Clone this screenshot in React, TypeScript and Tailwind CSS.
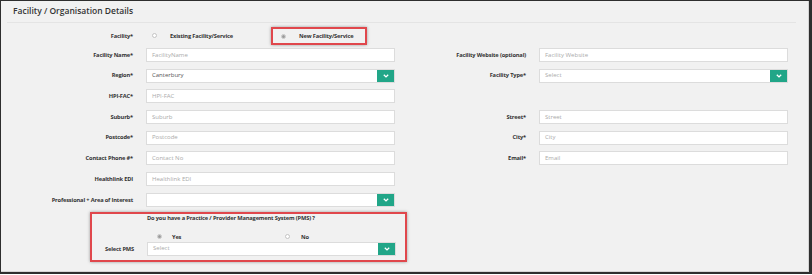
import React from "react";

type Field = {
  label: string;
  placeholder?: string;
  value?: string;
  select?: boolean;
};

const rows: [Field, Field | null][] = [
  [
    { label: "Facility Name*", placeholder: "FacilityName" },
    { label: "Facility Website (optional)", placeholder: "Facility Website" },
  ],
  [
    { label: "Region*", value: "Canterbury", select: true },
    { label: "Facility Type*", placeholder: "Select", select: true },
  ],
  [{ label: "HPI-FAC*", placeholder: "HPI-FAC" }, null],
  [
    { label: "Suburb*", placeholder: "Suburb" },
    { label: "Street*", placeholder: "Street" },
  ],
  [
    { label: "Postcode*", placeholder: "Postcode" },
    { label: "City*", placeholder: "City" },
  ],
  [
    { label: "Contact Phone #*", placeholder: "Contact No" },
    { label: "Email*", placeholder: "Email" },
  ],
  [{ label: "Healthlink EDI", placeholder: "Healthlink EDI" }, null],
  [{ label: "Professional + Area of Interest", select: true }, null],
];

function ChevronBtn() {
  return (
    <div className="flex w-[17px] shrink-0 items-center justify-center bg-[#21a688]">
      <svg width="6" height="4" viewBox="0 0 6 4">
        <path d="M0.8 0.7 L3 2.9 L5.2 0.7" stroke="#fff" strokeWidth="1.3" fill="none" />
      </svg>
    </div>
  );
}

function Input({ field }: { field: Field }) {
  return (
    <div className="flex h-[14px] w-[249px] shrink-0 border border-[#dcdcdc] bg-white">
      <div
        className={`flex flex-1 items-center pl-[5px] text-[6px] ${
          field.value ? "text-[#555]" : "text-[#aaa]"
        }`}
      >
        {field.value ?? field.placeholder}
      </div>
      {field.select && <ChevronBtn />}
    </div>
  );
}

function Radio({ checked }: { checked?: boolean }) {
  return (
    <span className="flex h-[5px] w-[5px] shrink-0 items-center justify-center rounded-full border border-[#c4c4c4] bg-white">
      {checked && <span className="h-[3px] w-[3px] rounded-full bg-[#9a9a9a]" />}
    </span>
  );
}

export default function App() {
  return (
    <div className="h-[275px] w-[812px] bg-white font-['Open_Sans',sans-serif] text-[#333]">
      <div className="h-[274px] border-t border-r-[3px] border-b-2 border-l border-[#2e2e2e]">
        <div className="h-full border-r border-b border-[#d4d4d4] bg-[#f1f1f1]">
          {/* Header */}
          <div className="ml-[6px] mr-[12px] flex h-[22px] items-center border-b border-[#e4e4e4] pl-[6px] text-[8.5px] font-semibold">
            Facility / Organisation Details
          </div>

          {/* Facility radio */}
          <div className="mt-[4px] flex h-[18px] items-center">
            <div className="w-[132px] text-right text-[5.7px] font-bold tracking-[-0.15px]">Facility*</div>
            <div className="ml-[13px] flex w-[249px] items-center">
              <div className="flex w-[125px] items-center pl-[6px]">
                <Radio />
                <span className="ml-[13px] text-[5.7px] font-bold tracking-[-0.15px]">Existing Facility/Service</span>
              </div>
              <div className="flex h-[18px] items-center border-2 border-[#e0474c] pr-[12px] pl-[8px] shadow-[0_0_3px_rgba(0,0,0,0.35)]">
                <Radio checked />
                <span className="ml-[13px] text-[5.7px] font-bold tracking-[-0.15px]">New Facility/Service</span>
              </div>
            </div>
          </div>

          {/* Field rows */}
          <div className="mt-[3px] flex flex-col gap-[6.7px]">
            {rows.map(([left, right]) => (
              <div key={left.label} className="flex h-[14px] items-center">
                <div className="w-[132px] text-right text-[5.7px] font-bold tracking-[-0.15px]">{left.label}</div>
                <div className="ml-[13px]">
                  <Input field={left} />
                </div>
                {right && (
                  <>
                    <div className="w-[131px] text-right text-[5.7px] font-bold tracking-[-0.15px]">{right.label}</div>
                    <div className="ml-[13px]">
                      <Input field={right} />
                    </div>
                  </>
                )}
              </div>
            ))}
          </div>

          {/* PMS block */}
          <div className="mt-[5px] ml-[89px] w-[317px] border-2 border-[#e0474c] pb-[4px] shadow-[0_0_3px_rgba(0,0,0,0.35)]">
            <div className="ml-[55px] flex h-[9px] items-center text-[5.7px] font-bold tracking-[-0.15px]">
              Do you have a Practice / Provider Management System (PMS) ?
            </div>
            <div className="mt-[9px] ml-[55px] flex h-[10px] w-[249px] items-center">
              <div className="flex w-[128px] items-center pl-[10px]">
                <Radio checked />
                <span className="ml-[10px] text-[5.7px] font-bold tracking-[-0.15px]">Yes</span>
              </div>
              <div className="flex items-center pl-[10px]">
                <Radio />
                <span className="ml-[11px] text-[5.7px] font-bold tracking-[-0.15px]">No</span>
              </div>
            </div>
            <div className="flex h-[14px] items-center">
              <div className="w-[42px] text-right text-[5.7px] font-bold tracking-[-0.15px]">Select PMS</div>
              <div className="ml-[13px]">
                <Input field={{ label: "Select PMS", placeholder: "Select", select: true }} />
              </div>
            </div>
          </div>
        </div>
      </div>
    </div>
  );
}
